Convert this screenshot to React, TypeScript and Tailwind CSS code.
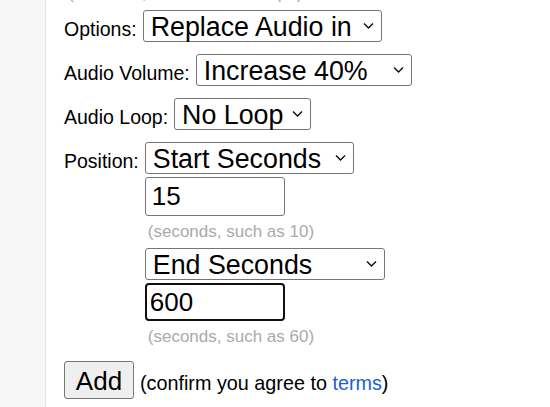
import { ReactNode } from 'react';

function Chevron() {
  return (
    <svg width="11" height="7" viewBox="0 0 11 7" className="pointer-events-none absolute right-[7px] top-1/2 -translate-y-1/2">
      <path d="M1 1 L5.5 5.5 L10 1" fill="none" stroke="#111" strokeWidth="1.5" />
    </svg>
  );
}

function Select({ value, width }: { value: string; width: string }) {
  return (
    <div className={`relative inline-flex h-[32px] items-center rounded-[3px] border border-[#767676] bg-white pl-[7px] ${width}`}>
      <span className="whitespace-nowrap pt-[2px] text-[26.8px] leading-[30px] text-black">{value}</span>
      <Chevron />
    </div>
  );
}

function Hint({ children }: { children: ReactNode }) {
  return <div className="h-[20px] whitespace-nowrap text-[17px] leading-[20px] text-[#aaaaaa]">{children}</div>;
}

export default function App() {
  return (
    <div className="flex h-[407px] w-[550px] overflow-hidden bg-white font-['Liberation_Sans',Arial,sans-serif] text-black">
      {/* side strip */}
      <div className="w-[46px] shrink-0 border-r border-[#e6e6e6] bg-[#f6f6f6]" />

      <div className="flex flex-col pl-[18px]">
        <div className="-mt-[16px] pl-[4px]">
          <Hint>(audio file, such as music.mp3)</Hint>
        </div>

        <div className="mt-[6px] flex flex-col gap-[12px]">
          <div className="flex items-baseline gap-[6px]">
            <span className="text-[19.5px] leading-[22px]">Options:</span>
            <Select value="Replace Audio in" width="w-[239px]" />
          </div>

          <div className="flex items-baseline gap-[6px]">
            <span className="text-[19.5px] leading-[22px]">Audio Volume:</span>
            <Select value="Increase 40%" width="w-[216px]" />
          </div>

          <div className="flex items-baseline gap-[6px]">
            <span className="text-[19.5px] leading-[22px]">Audio Loop:</span>
            <Select value="No Loop" width="w-[137px]" />
          </div>

          <div className="flex items-baseline gap-[6px]">
            <span className="text-[19.5px] leading-[22px]">Position:</span>
            <div className="flex flex-col">
              <Select value="Start Seconds" width="w-[209px]" />
              <input
                readOnly
                value="15"
                className="mt-[3px] h-[39px] w-[140px] rounded-[3px] border border-[#767676] bg-white pl-[6px] text-[26px] text-black outline-none"
              />
              <div className="mt-[6px] mb-[6px] pl-[3px]">
                <Hint>(seconds, such as 10)</Hint>
              </div>
              <Select value="End Seconds" width="w-[240px]" />
              <input
                readOnly
                value="600"
                className="mt-[3px] h-[38px] w-[140px] rounded-[4px] border-2 border-[#101010] bg-white pl-[3px] text-[26px] text-black outline-none"
              />
              <div className="mt-[6px] pl-[3px]">
                <Hint>(seconds, such as 60)</Hint>
              </div>
            </div>
          </div>

          <div className="mt-[2px] flex items-baseline gap-[6px]">
            <button className="h-[38px] w-[70px] rounded-[3px] border border-[#767676] bg-[#efefef] pt-[2px] text-[26px] leading-[30px] text-black">
              Add
            </button>
            <span className="text-[19.8px] leading-[22px]">
              (confirm you agree to <a className="text-[#1a5fd1]">terms</a>)
            </span>
          </div>
        </div>
      </div>
    </div>
  );
}
